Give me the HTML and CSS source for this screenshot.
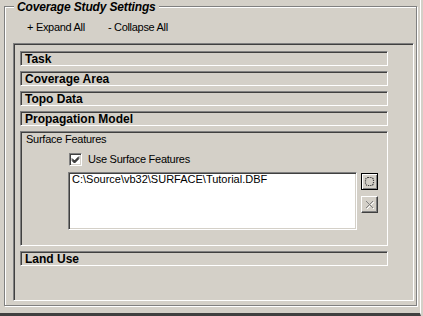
FILE: index.html
```html
<!DOCTYPE html>
<html>
<head>
    <link rel="stylesheet" href="styles.css">
</head>
<body>
    <div class="window">
        <div class="group">
            <div class="group-title">Coverage Study Settings</div>
            <div class="toolbar">
                <span class="tool-link">+ Expand All</span>
                <span class="tool-link">- Collapse All</span>
            </div>
            <div class="panel">
                <div class="section">Task</div>
                <div class="section">Coverage Area</div>
                <div class="section">Topo Data</div>
                <div class="section">Propagation Model</div>
                <div class="fbox">
                    <div class="fbox-title">Surface Features</div>
                    <label class="check-row">
                        <span class="check-box">
                            <svg width="9" height="9" viewBox="0 0 9 9">
                                <path d="M1 3.5 L3.5 6 L8 1.5 M1 4.5 L3.5 7 L8 2.5 M1 5.5 L3.5 8 L8 3.5" stroke="#000" stroke-width="1" fill="none"/>
                            </svg>
                        </span>
                        <span class="check-label">Use Surface Features</span>
                    </label>
                    <div class="file-row">
                        <div class="listbox">C:\Source\vb32\SURFACE\Tutorial.DBF</div>
                        <div class="btn-col">
                            <button class="tool-btn default" title="Add">
                                <svg width="13" height="13" viewBox="0 0 13 13">
                                    <rect x="2.5" y="2.5" width="8" height="8" rx="2.5" fill="none" stroke="#404040" stroke-width="1.2" stroke-dasharray="1.3 0.9"/>
                                </svg>
                            </button>
                            <button class="tool-btn" title="Remove" disabled>
                                <svg width="11" height="11" viewBox="0 0 11 11">
                                    <path d="M3 3 L10 10 M10 3 L3 10" stroke="#fff" stroke-width="1"/>
                                    <path d="M2 2 L9 9 M9 2 L2 9" stroke="#808080" stroke-width="1"/>
                                </svg>
                            </button>
                        </div>
                    </div>
                </div>
                <div class="section">Land Use</div>
            </div>
        </div>
    </div>
</body>
</html>
```

FILE: styles.css
```css
/* classic win32 property panel */

* {
    box-sizing: border-box;
}

body {
    margin: 0;
    background-color: #d4d0c8;
    color: #000;
    font-family: "Liberation Sans", Arial, sans-serif;
    font-size: 11px;
}

.window {
    width: 421px;
    height: 316px;
    padding: 6px 0 0 4px;
    border-right: 1px solid #fff;
    border-bottom: 3px solid #404040;
}

/* etched group frame */
.group {
    width: 413px;
    height: 300px;
    border: 1px solid #808080;
    box-shadow: inset 1px 1px #fff, 1px 1px #fff;
}

.group-title {
    width: fit-content;
    margin: -7px 0 0 9px;
    padding: 0 3px;
    background-color: #d4d0c8;
    font-size: 12px;
    font-weight: bold;
    font-style: italic;
    line-height: 14px;
    letter-spacing: -0.15px;
}

.toolbar {
    display: flex;
    gap: 23px;
    margin-top: 7px;
    padding-left: 22px;
    line-height: 13px;
}

.tool-link {
    letter-spacing: -0.3px;
    cursor: pointer;
}

/* sunken container */
.panel {
    width: 401px;
    height: 258px;
    margin: 9px 0 0 8px;
    padding: 7px 25px 0 6px;
    border: 1px solid;
    border-color: #808080 #fff #fff #808080;
    box-shadow: inset 1px 1px #404040;
}

.section {
    height: 15px;
    margin-bottom: 5px;
    padding-left: 4px;
    border: 1px solid;
    border-color: #808080 #fff #fff #808080;
    box-shadow: inset 1px 1px #404040;
    font-size: 12px;
    font-weight: bold;
    line-height: 14px;
}

.fbox {
    height: 115px;
    margin-bottom: 5px;
    padding: 1px 0 0 5px;
    border: 1px solid;
    border-color: #808080 #fff #fff #808080;
    box-shadow: inset 1px 1px #404040;
}

.fbox-title {
    line-height: 13px;
    letter-spacing: -0.25px;
}

.check-row {
    display: flex;
    align-items: center;
    gap: 6px;
    height: 13px;
    margin: 7px 0 0 43px;
    line-height: 13px;
}

.check-box {
    display: flex;
    align-items: center;
    justify-content: center;
    width: 13px;
    height: 13px;
    background-color: #fff;
    border: 1px solid;
    border-color: #808080 #fff #fff #808080;
    box-shadow: inset 1px 1px #404040, inset -1px -1px #d4d0c8;
}

.check-label {
    letter-spacing: -0.25px;
}

.file-row {
    display: flex;
    gap: 4px;
    margin: 6px 0 0 42px;
}

.listbox {
    width: 289px;
    height: 58px;
    padding: 0 3px;
    background-color: #fff;
    border: 1px solid;
    border-color: #808080 #fff #fff #808080;
    box-shadow: inset 1px 1px #404040, inset -1px -1px #d4d0c8;
    line-height: 13px;
    white-space: nowrap;
}

.btn-col {
    display: flex;
    flex-direction: column;
    gap: 6px;
    margin-top: 1px;
}

.tool-btn {
    display: flex;
    align-items: center;
    justify-content: center;
    width: 17px;
    height: 17px;
    padding: 0;
    background-color: #d4d0c8;
    border: 1px solid;
    border-color: #fff #404040 #404040 #fff;
    box-shadow: inset -1px -1px #808080;
}

.tool-btn.default {
    border-color: #000;
    box-shadow: inset 1px 1px #fff, inset -1px -1px #808080;
}
```
